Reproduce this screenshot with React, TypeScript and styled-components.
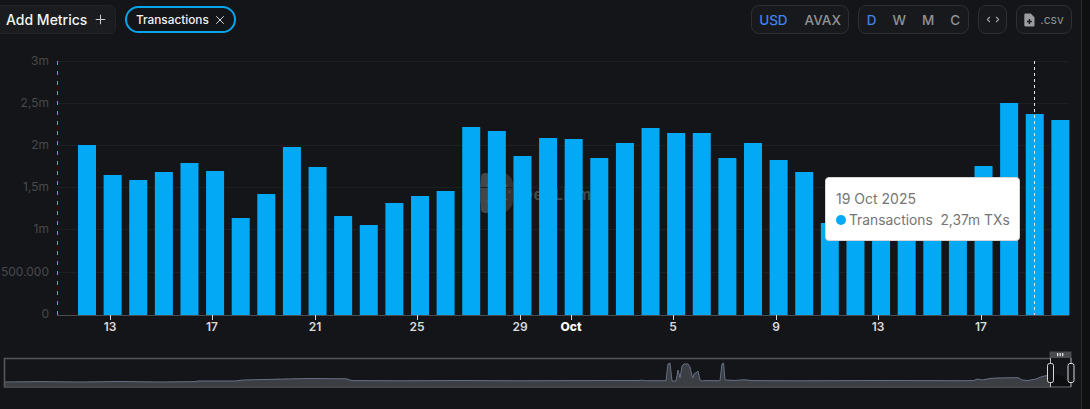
import React from "react";
import styled, { createGlobalStyle } from "styled-components";
import { Plus, X, ChevronLeft, ChevronRight } from "lucide-react";

const Global = createGlobalStyle`
  html, body { margin: 0; padding: 0; background: #141518; }
  body { font-family: Inter, "Liberation Sans", sans-serif; overflow: hidden; }
`;

const Page = styled.div`
  position: relative;
  width: 1090px;
  height: 409px;
  overflow: hidden;
  background: #141518;
  display: flex;
  flex-direction: column;
`;

const Toolbar = styled.div`
  display: flex;
  align-items: center;
  justify-content: space-between;
  height: 29px;
  padding: 5px 18px 0 0;
`;

const LeftSide = styled.div`
  display: flex;
  align-items: center;
  gap: 9px;
`;

const RightSide = styled.div`
  display: flex;
  align-items: center;
  gap: 9px;
`;

const AddButton = styled.button`
  display: flex;
  align-items: center;
  gap: 6px;
  height: 29px;
  width: 124px;
  margin-left: -8px;
  padding: 0 0 0 13px;
  box-sizing: border-box;
  border: 1px solid #212326;
  border-radius: 6px;
  background: #1a1c1f;
  color: #f2f3f4;
  font: 500 14px Inter, sans-serif;
  white-space: nowrap;
`;

const Pill = styled.div`
  display: flex;
  align-items: center;
  gap: 4px;
  height: 27px;
  width: 111px;
  box-sizing: border-box;
  padding-left: 9px;
  border: 2px solid #06a5ec;
  border-radius: 14px;
  color: #f2f3f4;
  font: 500 11.8px Inter, sans-serif;
  white-space: nowrap;
`;

const Group = styled.div<{ $w: number; $gap?: number }>`
  display: flex;
  align-items: center;
  justify-content: center;
  gap: ${(p) => p.$gap ?? 0}px;
  width: ${(p) => p.$w}px;
  height: 29px;
  box-sizing: border-box;
  border: 1px solid #2d2f33;
  border-radius: 8px;
  background: #17191c;
`;

const Option = styled.span<{ $active?: boolean }>`
  font: 500 13.5px Inter, sans-serif;
  color: ${(p) => (p.$active ? "#3f83f2" : "#8f9296")};
`;

const CsvLabel = styled.span`
  font: 400 12px Inter, sans-serif;
  color: #8f9296;
`;

const Chart = styled.svg`
  display: block;
  margin-top: 18px;
  flex: none;
`;

const Brush = styled.svg`
  display: block;
  margin-top: 6px;
  flex: none;
`;

const Tooltip = styled.div`
  position: absolute;
  left: 825px;
  top: 177px;
  width: 195px;
  height: 64px;
  box-sizing: border-box;
  padding: 11px 8px 0 10px;
  background: #fff;
  border: 1px solid #d5d5d5;
  border-radius: 4px;
  color: #757575;
  font: 400 14px Inter, sans-serif;
  line-height: 20px;
`;

const TipRow = styled.div`
  display: flex;
  align-items: center;
  margin-top: 1px;
  white-space: pre;
  font-size: 13.8px;
`;

const Dot = styled.span`
  flex: none;
  width: 10px;
  height: 10px;
  border-radius: 50%;
  background: #06a9f5;
  margin-right: 3px;
`;

const RightEdge = styled.div`
  position: absolute;
  right: 0;
  top: 0;
  width: 8px;
  height: 100%;
  background: #0f1012;
  border-left: 1px solid #2a2c2f;
`;

const tops = [145,175,180,172,163,171,218,194,147,167,216,225,203,196,191,127,131,156,138,139,158,143,128,133,133,158,143,160,172,223,228,226,226,224,224,166,103,114,120];
const gridYs = [61,103,145,187,229,272];
const yLabels: [string, number][] = [["3m",61],["2,5m",103],["2m",145],["1,5m",187],["1m",229],["500.000",272],["0",314]];
const xLabels: [string, number, boolean?][] = [["13",110],["17",212],["21",315],["25",417],["29",520],["Oct",571,true],["5",673],["9",776],["13",878],["17",981]];

const miniPts: [number, number][] = [
  [5,382],[40,381.6],[80,382],[120,381.5],[160,382],[195,381.6],[198,381],[235,381],[243,380],[265,379.5],[285,379],[310,378.5],[346,378.8],[352,380.6],
  [400,380.8],[460,380.5],[520,380.8],[580,380.6],[640,380.5],[642,380],[644,380.7],[666,380.7],[668,364],[670,363],[672,381],[676,381],[678,370],[680,378],[682,366],[684,364],[688,364],[690,367],[692,376],[693,378],[694,374],[695,373],[696,373],[698,371],[700,380],[702,381],[706,380.6],[720,380.7],[722,364],[723.5,363],[725,380],[735,380.5],[740,380],[745,379.8],[752,380.6],
  [800,380.8],[880,380.5],[960,380.7],[974,380.6],[977,379],[982,380],[990,378.5],[996,378],[1018,377.6],[1022,380],[1028,380.5],[1036,379],[1042,376.5],[1050,375],
];
const linePath = miniPts.map(([x,y],i)=>`${i?"L":"M"}${x} ${y}`).join(" ");
const areaPath = `${linePath} L1050 386 L5 386 Z`;

const labelFont = "Inter, sans-serif";

export default function App() {
  return (
    <Page>
      <Global />
      <Toolbar>
        <LeftSide>
          <AddButton>Add Metrics<Plus size={15} color="#c9cacc" strokeWidth={1.6} /></AddButton>
          <Pill>Transactions<X size={14} color="#e6e7e8" strokeWidth={1.6} /></Pill>
        </LeftSide>
        <RightSide>
          <Group $w={98} $gap={17}><Option $active>USD</Option><Option>AVAX</Option></Group>
          <Group $w={111} $gap={16}><Option $active>D</Option><Option>W</Option><Option>M</Option><Option>C</Option></Group>
          <Group $w={29}>
            <ChevronLeft size={9} color="#a0a2a5" strokeWidth={3} />
            <ChevronRight size={9} color="#a0a2a5" strokeWidth={3} />
          </Group>
          <Group $w={56} $gap={5}>
            <svg width="11" height="14" viewBox="0 0 11 14">
              <path d="M1.5 0.5h5.2l3.8 3.8v8a1.2 1.2 0 0 1-1.2 1.2H1.5A1.2 1.2 0 0 1 .3 12.3V1.7A1.2 1.2 0 0 1 1.5 .5z" fill="#9a9c9f" />
              <path d="M5.4 6v5M3 8.5h4.8" stroke="#17191c" strokeWidth="1.4" />
            </svg>
            <CsvLabel>.csv</CsvLabel>
          </Group>
        </RightSide>
      </Toolbar>

      <Chart width={1090} height={293} viewBox="0 52 1090 293">
        <rect x="480" y="172" width="33" height="41" rx="13" fill="#323437" />
        <rect x="481" y="173" width="9" height="40" rx="4" fill="#45464a" />
        <path d="M507 185l-3 3M511 192h-3M507 200l-3-3M487 184v3M487 200v3" stroke="#55565a" strokeWidth="1.2" />
        <text x="522" y="200" fontFamily={labelFont} fontWeight="700" fontSize="15" letterSpacing="0.6" fill="#47484b">DefiLlama</text>
        {gridYs.map((y) => <line key={y} x1="57" x2="1069" y1={y + 0.5} y2={y + 0.5} stroke="#1d1f22" />)}
        <line x1="57.5" x2="57.5" y1="61" y2="315" stroke="#45ade0" strokeDasharray="4 6" />
        {tops.map((t, i) => {
          const x = 78 + i * 25.615;
          return <rect key={i} x={x} y={t} width={18} height={315 - t} fill="#04a9f6" />;
        })}
        <line x1="57" x2="1069" y1="315.5" y2="315.5" stroke="#4a4c50" />
        <line x1="1034.5" x2="1034.5" y1="61" y2="315" stroke="#e4e6e8" strokeDasharray="3 3" />
        {yLabels.map(([t, y]) => (
          <text key={t} x="49" y={y + 4} textAnchor="end" fontFamily={labelFont} fontSize="12" fill="#47494c">{t}</text>
        ))}
        {xLabels.map(([t, x, bold]) => (
          <g key={t + x}>
            <line x1={x + 0.5} x2={x + 0.5} y1="315" y2="320" stroke="#d8d9da" />
            <text x={x} y="331" textAnchor="middle" fontFamily={labelFont} fontSize="12" fontWeight={bold ? 800 : 600} fill={bold ? "#ffffff" : "#d8dadc"}>{t}</text>
          </g>
        ))}
      </Chart>

      <Brush width={1090} height={58} viewBox="0 351 1090 58">
        <path d={areaPath} fill="#3b3e43" />
        <path d={linePath} fill="none" stroke="#667084" strokeWidth="1" />
        <path d="M1051 375 L1056 375 L1062 376 L1066 380 L1071 381 L1071 386 L1051 386 Z" fill="#0d0e10" />
        <path d="M1051 358.5 H4.5 V387 H1051" fill="none" stroke="#565759" strokeWidth="1.6" />
        <path d="M1071 387 H1051" stroke="#4a4b4d" strokeWidth="1.6" />
        <path d="M1049.5 358 V351.5 H1071.5 V358 Z" fill="#4a4b4e" />
        <rect x="1057" y="353" width="1.3" height="3.2" fill="#e4e4e4" />
        <rect x="1059.5" y="353" width="1.3" height="3.2" fill="#e4e4e4" />
        <rect x="1062" y="353" width="1.3" height="3.2" fill="#e4e4e4" />
        <line x1="1050.5" x2="1050.5" y1="358" y2="387" stroke="#b8b9ba" />
        <line x1="1071" x2="1071" y1="358" y2="387" stroke="#b8b9ba" />
        <rect x="1047.5" y="363.5" width="6" height="19" rx="2" fill="#141518" stroke="#d8d9da" />
        <rect x="1068" y="363.5" width="6" height="19" rx="2" fill="#141518" stroke="#d8d9da" />
      </Brush>

      <Tooltip>
        <div>19 Oct 2025</div>
        <TipRow><Dot />Transactions  2,37m TXs</TipRow>
      </Tooltip>
      <RightEdge />
    </Page>
  );
}
